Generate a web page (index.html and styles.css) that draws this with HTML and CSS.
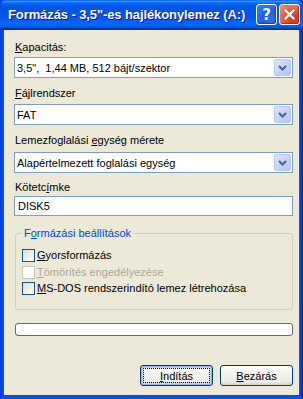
FILE: index.html
```html
<!DOCTYPE html>
<html lang="hu">
<head>
<meta charset="utf-8">
<title>Formázás</title>
<link rel="stylesheet" href="styles.css">
</head>
<body>
<div class="window">
  <div class="titlebar">
    <span class="title">Formázás - 3,5"-es hajlékonylemez (A:)</span>
    <div class="tbtns">
      <div class="tb help">?</div>
      <div class="tb close">
        <svg width="11" height="11" viewBox="0 0 11 11"><path d="M1.5 1.5 L9.5 9.5 M9.5 1.5 L1.5 9.5" stroke="#fff" stroke-width="2.2" stroke-linecap="square"/></svg>
      </div>
    </div>
  </div>
  <div class="client">
    <div class="label l1"><u>K</u>apacitás:</div>
    <div class="combo c1"><span class="val">3,5",&nbsp; 1,44 MB, 512 bájt/szektor</span><span class="arrow"><svg width="9" height="6" viewBox="0 0 9 6"><path d="M1 1 L4.5 4.5 L8 1" fill="none" stroke="#4D6185" stroke-width="2"/></svg></span></div>
    <div class="label l2"><u>F</u>ájlrendszer</div>
    <div class="combo c2"><span class="val">FAT</span><span class="arrow"><svg width="9" height="6" viewBox="0 0 9 6"><path d="M1 1 L4.5 4.5 L8 1" fill="none" stroke="#4D6185" stroke-width="2"/></svg></span></div>
    <div class="label l3">Lemezfoglalási <u>e</u>gység mérete</div>
    <div class="combo c3"><span class="val">Alapértelmezett foglalási egység</span><span class="arrow"><svg width="9" height="6" viewBox="0 0 9 6"><path d="M1 1 L4.5 4.5 L8 1" fill="none" stroke="#4D6185" stroke-width="2"/></svg></span></div>
    <div class="label l4">Kötetc<u>í</u>mke</div>
    <div class="textbox">DISK5</div>
    <fieldset class="group">
      <legend>F<u>o</u>rmázási beállítások</legend>
      <div class="check r1"><span class="box"></span><span><u>G</u>yorsformázás</span></div>
      <div class="check r2 disabled"><span class="box"></span><span><u>T</u>ömörítés engedélyezése</span></div>
      <div class="check r3"><span class="box"></span><span><u>M</u>S-DOS rendszerindító lemez létrehozása</span></div>
    </fieldset>
    <div class="progress"></div>
    <div class="buttons">
      <div class="btn default"><span class="focus"><u>I</u>ndítás</span></div>
      <div class="btn"><span class="focus nofocus"><u>B</u>ezárás</span></div>
    </div>
  </div>
</div>
</body>
</html>
```

FILE: styles.css
```css
* { box-sizing: border-box; }
html, body { margin: 0; padding: 0; }
body { width: 303px; height: 399px; overflow: hidden; font-family: "Liberation Sans", Arial, sans-serif; font-size: 11px; color: #000; }

.window {
  width: 303px; height: 399px;
  background: linear-gradient(to right, #0831D9 0px, #0054E3 2px, #0054E3 300px, #001EA0 303px);
  display: flex; flex-direction: column;
}
.titlebar {
  height: 30px; flex: none;
  display: flex; align-items: center; justify-content: space-between;
  padding: 0 3px 0 8px;
  border-radius: 7px 7px 0 0;
  background: linear-gradient(to bottom, #0058ee 0%, #3593ff 4%, #288eff 6%, #127dff 8%, #036ffc 10%, #0262ee 14%, #0057e5 20%, #0054e3 24%, #0055eb 56%, #005bf5 66%, #026afe 76%, #0062ef 86%, #0052d6 92%, #0040ab 94%, #003092 100%);
}
.title {
  color: #fff; font-weight: bold; font-size: 13px;
  font-family: "Liberation Sans", Arial, sans-serif;
  text-shadow: 1px 1px #0F1089;
  white-space: nowrap;
  letter-spacing: -0.1px;
  padding-bottom: 1px;
}
.tbtns { display: flex; gap: 2px; padding-bottom: 1px; }
.tb {
  width: 21px; height: 21px; border: 1px solid #fff; border-radius: 3px;
  display: flex; align-items: center; justify-content: center;
  color: #fff; font-weight: bold; font-size: 15px;
  font-family: "DejaVu Sans", sans-serif;
}
.help { background: radial-gradient(circle at 70% 75%, #2C72FF 0%, #1A5EF0 40%, #3D84FF 100%); box-shadow: inset -1px -1px 1px #1A3FB8; }
.close { background: radial-gradient(circle at 70% 75%, #C5391B 0%, #E05A35 45%, #F0947A 100%); box-shadow: inset -1px -1px 1px #B02808; }

.client {
  flex: 1; margin: 0 4px 4px 4px;
  background: #ECE9D8;
  padding: 11px 6px 9px 10px;
  display: flex; flex-direction: column;
}
.label { height: 13px; line-height: 13px; padding-left: 1px; }
.l2, .l3 { margin-top: 9px; }
.l4 { margin-top: 8px; }

.combo {
  height: 21px; border: 1px solid #7F9DB9; background: #fff;
  display: flex; align-items: center; justify-content: space-between;
  margin-top: 3px;
}
.c2 { margin-top: 4px; }
.c3 { margin-top: 5px; }
.combo .val { padding-left: 2px; white-space: pre; }
.arrow {
  width: 17px; height: 17px; margin-right: 1px;
  border: 1px solid #B9CBF3; border-radius: 2px;
  background: linear-gradient(to bottom right, #DCE6FD 0%, #C3D4FC 50%, #B2C5F5 100%);
  display: flex; align-items: center; justify-content: center;
}
.textbox {
  height: 20px; border: 1px solid #7F9DB9; background: #fff;
  margin-top: 2px; padding-left: 3px; line-height: 18px;
}

.group {
  margin: 11px 0 0 1px; padding: 7px 6px 13px 6px;
  border: 1px solid #D0D0BF; border-radius: 3px;
  min-width: 0;
}
.group legend { color: #0046D5; padding: 0 2px; line-height: 13px; }
.check { display: flex; align-items: center; gap: 2px; height: 16px; }
.r2 { margin-top: 1px; }
.box {
  width: 13px; height: 13px; border: 1px solid #1C5180;
  background: linear-gradient(to bottom right, #DCDCD7 0%, #F0F0EA 60%, #FFFFFF 100%);
  flex: none;
}
.disabled { color: #ACA899; }
.disabled .box { border-color: #CAC8BB; background: #fff; }

.progress {
  margin: 13px 0 0 1px; height: 13px;
  border: 1px solid #686868; border-radius: 3px; background: #fff;
}
.buttons { margin-top: 29px; display: flex; justify-content: flex-end; gap: 7px; }
.btn {
  width: 73px; height: 21px; border: 1px solid #003C74; border-radius: 3px;
  background: linear-gradient(to bottom, #FFFFFF 0%, #F4F3EE 40%, #ECEBE6 85%, #D6D0C5 100%);
  display: flex; align-items: stretch; padding: 1px;
}
.btn.default { box-shadow: inset 0 0 0 1px #98B8EA, inset 0 0 0 2px #BCD4F6; padding: 2px; }
.focus {
  flex: 1; display: flex; align-items: center; justify-content: center;
  outline: 1px dotted #000; outline-offset: -1px;
}
.focus.nofocus { outline: none; }
```
